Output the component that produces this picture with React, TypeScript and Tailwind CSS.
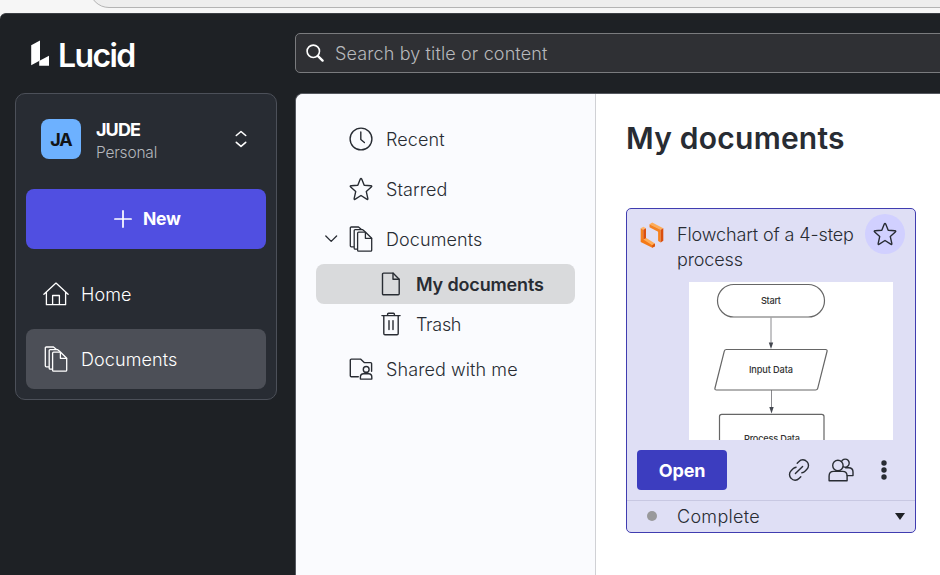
import type { ReactNode } from "react";

type IconProps = { className?: string };

function Svg({ w, h, sw = 1.3, className = "", children }: { w: number; h: number; sw?: number; className?: string; children: ReactNode }) {
  return (
    <svg
      width={w}
      height={h}
      viewBox={`0 0 ${w} ${h}`}
      fill="none"
      stroke="currentColor"
      strokeWidth={sw}
      strokeLinejoin="round"
      strokeLinecap="round"
      className={`block shrink-0 ${className}`}
    >
      {children}
    </svg>
  );
}

const LucidMark = () => (
  <svg width="19" height="27" viewBox="0 0 19 27" fill="#fff" className="block shrink-0">
    <path d="M.2 5.3 9 .5v20L.2 25.2Z" />
    <path d="M9 20.5 18 15.8v9.9H8.2L8.2 21Z" />
  </svg>
);

const DocsIcon = ({ className }: IconProps) => (
  <Svg w={24} h={26} className={className}>
    <path d="M4.6 20.8H2.3a1 1 0 0 1-1-1V2a1 1 0 0 1 1-1h7.2l2.7 2.2" />
    <path d="M8.2 23.2H6.2a1 1 0 0 1-1-1V4.6a1 1 0 0 1 1-1h7.2l2.5 2" />
    <path d="M9.6 6.2h7l6.1 6v12a1 1 0 0 1-1 1H9.6a1 1 0 0 1-1-1v-17a1 1 0 0 1 1-1Z" />
    <path d="M16.4 6.3v6h6.2" />
  </Svg>
);

const HomeIcon = () => (
  <Svg w={26} h={24}>
    <path d="M.9 12.2 13 1.1l12.1 11.1M3.4 10v12.7h19.2V10M9.6 22.6v-9.1h6.8v9.1" />
  </Svg>
);

const StarIcon = () => (
  <Svg w={24} h={24} sw={1.4}>
    <path d="M11.3 2.1q.7-1.5 1.4 0l2.5 6.1 6.7.6q1.5.2.4 1.3l-5 4.5 1.5 6.8q.3 1.6-1.1.8L12 18.5l-5.7 3.7q-1.4.8-1.1-.8l1.5-6.8-5-4.5q-1.1-1.1.4-1.3l6.7-.6Z" />
  </Svg>
);

const ClockIcon = () => (
  <Svg w={24} h={24} sw={1.4}>
    <circle cx="12" cy="12" r="10.9" />
    <path d="M11.8 4.9v7.6l3.6 3" />
  </Svg>
);

const FileIcon = () => (
  <Svg w={20} h={24} sw={1.4}>
    <path d="M2.5 1.1H12l6.2 6.2v14.5a1 1 0 0 1-1 1H2.5a1 1 0 0 1-1-1V2.1a1 1 0 0 1 1-1Z" />
    <path d="M12 1.3v6h6" />
  </Svg>
);

const TrashIcon = () => (
  <Svg w={20} h={24} sw={1.4}>
    <path d="M.9 3.6h18.2M6.6 3.4V2.3a1 1 0 0 1 1-1h4.8a1 1 0 0 1 1 1v1.1M2.8 3.8v17.7a1.2 1.2 0 0 0 1.2 1.2h12a1.2 1.2 0 0 0 1.2-1.2V3.8M8 8.6v9M12 8.6v9" />
  </Svg>
);

const SharedIcon = () => (
  <Svg w={24} h={22} sw={1.4}>
    <path d="M9.3 18.8H2.3a1 1 0 0 1-1-1V2.1a1 1 0 0 1 1-1h9.2l3.7 3.5h6.4a1 1 0 0 1 1 1v7.6" />
    <circle cx="17.2" cy="11.4" r="2.9" />
    <path d="M11.4 21.1v-2.2q0-3.2 3.2-3.2h5q3.2 0 3.2 3.2v2.2Z" />
  </Svg>
);

const LinkIcon = () => (
  <Svg w={22} h={22} sw={1.4}>
    <path d="M9.2 4.3 11 2.5a5.2 5.2 0 0 1 7.8.1 5.2 5.2 0 0 1 .1 7.6l-2.2 2.2a5 5 0 0 1-2.8 1.4" />
    <path d="M12.8 17.7 11 19.5a5.2 5.2 0 0 1-7.8-.1 5.2 5.2 0 0 1-.1-7.6l2.2-2.2a5 5 0 0 1 2.8-1.4" />
    <path d="m7.4 14.6 7.2-7.2" />
  </Svg>
);

const PeopleIcon = () => (
  <Svg w={26} h={24} sw={1.4}>
    <circle cx="9.9" cy="7.5" r="5.2" />
    <path d="M1.1 22.7v-4.8q0-4.5 4.5-4.5h9q4.5 0 4.5 4.5v4.8Z" />
    <path d="M13.5 3.6a4 4 0 1 1 2.1 5.2M17.6 9.7h3q4.4 0 4.4 4.4v3.5h-5.7" />
  </Svg>
);

const ChartIcon = () => (
  <svg width="24" height="27" viewBox="0 0 24 27" className="block shrink-0">
    <path d="M.7 6.3 3.4 4.8 6 6.2 3.3 7.7Z" fill="#ffb66b" />
    <path d="M.7 6.3 3.3 7.7v11.1l-2.6-1.3Z" fill="#f58220" />
    <path d="M3.3 7.7 6 6.2v11.4l-2.7 1.7Z" fill="#da4f0e" />
    <path d="M.7 17.6 3.3 16.4 15 22v2.3l-2.7 1.5L.7 20Z" fill="#f47a18" />
    <path d="m3.3 17.5 3-1.6 8.7 5.6-2.8 1.7Z" fill="#ffad58" />
    <path d="M12.3 23.2 15 21.6v2.6l-2.7 1.6Z" fill="#d9530e" />
    <path d="M9.5 2.2 12.2.6 23.3 6.3l-2.6 1.5Z" fill="#ffad58" />
    <path d="m9.5 2.2 11.2 5.6v12.6l-2.6-1.3V9.7L9.5 5.2Z" fill="#f58220" />
    <path d="m20.7 7.8 2.6-1.5v12.5l-2.6 1.6Z" fill="#da4f0e" />
  </svg>
);

function FlowPreview() {
  return (
    <svg width="204" height="158" viewBox="0 0 204 158" className="ml-[62px] block bg-white" fill="none" stroke="#666" strokeWidth="1.2">
      <rect x="28.5" y="2.5" width="107" height="32.5" rx="16.3" />
      <path d="M82 35.5V63M82.5 108v18" stroke="#8a8a8e" strokeWidth="1" />
      <path d="m79.8 60.5 2.2 6.5 2.2-6.5ZM80.3 125l2.2 6.5 2.2-6.5Z" fill="#444850" stroke="none" />
      <path d="M37.5 67.5h99q2 0 1.5 2l-9.3 36.8q-.4 1.7-2.2 1.7h-99q-2 0-1.5-2l9.3-36.8q.4-1.7 2.2-1.7Z" />
      <path d="M30.5 160v-25.5q0-2.2 2.2-2.2h100q2.3 0 2.3 2.2V160" />
      <g fill="#333" stroke="none" textAnchor="middle" fontFamily="Inter, sans-serif" fontSize="9.2" fontWeight="450">
        <text x="82" y="22.4" textLength="20">Start</text>
        <text x="82" y="91" textLength="44">Input Data</text>
        <text x="83" y="160" textLength="56">Process Data</text>
      </g>
    </svg>
  );
}

export default function App() {
  return (
    <div className="h-[575px] w-[940px] overflow-hidden bg-[#f6f6f6] font-['Inter',sans-serif] text-[18px] font-[360] tracking-[0.09px] text-[#282c33]">
      <div className="flex h-[13px] items-end overflow-hidden pb-[5px] pl-[89px]">
        <div className="h-[40px] w-[900px] shrink-0 rounded-l-[20px] border border-[#b4b4b4] bg-[#eeeeee]" />
      </div>
      <div className="flex h-[562px] w-[960px] rounded-tl-[6px] border-t border-[#3c3f44] bg-[#1e2125]">
        <aside className="w-[295px] shrink-0 pl-[15px] pt-[26px] text-white">
          <div className="flex h-[27px] pl-[16px]">
            <LucidMark />
            <span className="ml-[8px] mt-px text-[32px] leading-[30px] font-semibold tracking-[-1.6px]">Lucid</span>
          </div>
          <div className="mt-[26px] h-[307px] w-[262px] rounded-[10px] border border-[#4c5059] bg-[#282c33] px-[10px]">
            <div className="flex h-[95px] items-start pl-[15px] pt-[25px]">
              <div className="flex size-10 items-center justify-center rounded-[8px] bg-[#6db1ff] text-[18px] font-bold tracking-[-1px] text-[#121417]">JA</div>
              <div className="ml-[15px] w-[139px]">
                <div className="text-[18px] leading-[22px] font-bold tracking-[-0.9px]">JUDE</div>
                <div className="text-[15.5px] leading-[23px] tracking-[-0.2px] text-[#b4b7bc]">Personal</div>
              </div>
              <Svg w={12} h={18} sw={1.6} className="mt-[11px]">
                <path d="m1.3 5.5 4.7-4 4.7 4M1.3 12.3l4.7 4 4.7-4" />
              </Svg>
            </div>
            <button className="flex h-[60px] w-full items-center rounded-[8px] bg-[#504fe1] pl-[88px]">
              <Svg w={18} h={18} sw={1.7}>
                <path d="M9 .9v16.2M.9 9h16.2" />
              </Svg>
              <span className="ml-[11px] mt-px text-[17.5px] font-bold tracking-[-0.25px]">New</span>
            </button>
            <nav className="mt-[15px] flex flex-col gap-[5px]">
              <a className="flex h-[60px] items-center pl-[17px]">
                <HomeIcon />
                <span className="ml-[12px]">Home</span>
              </a>
              <a className="flex h-[60px] items-center rounded-[8px] bg-[#4c4f57] pl-[18px]">
                <DocsIcon />
                <span className="ml-[13px]">Documents</span>
              </a>
            </nav>
          </div>
        </aside>

        <div className="w-[665px] pt-[19px]">
          <div className="flex h-[40px] items-center rounded-[5px] border border-[#7a7b7e] bg-[#2f3034] pl-[10px]">
            <Svg w={19} h={19} sw={1.6} className="text-white">
              <circle cx="7.3" cy="7.3" r="6.2" />
              <path d="m12 12.2 4.6 4.4" strokeWidth="2.4" />
            </Svg>
            <span className="ml-[10px] tracking-[0.13px] text-[#b7b8bb]">Search by title or content</span>
          </div>

          <div className="mt-[20px] flex h-[490px] overflow-hidden rounded-tl-[8px] border-l border-t border-[#55585f] bg-white">
            <nav className="h-full w-[300px] shrink-0 border-r border-[#d0d1d5] bg-[#fafbfe] pt-[20px]">
              <a className="flex h-[50px] items-center pl-[53px]">
                <ClockIcon />
                <span className="ml-[13px]">Recent</span>
              </a>
              <a className="flex h-[50px] items-center pl-[53px]">
                <StarIcon />
                <span className="ml-[13px]">Starred</span>
              </a>
              <a className="flex h-[50px] items-center pl-[29px]">
                <Svg w={13} h={8} sw={1.3}>
                  <path d="m.8 1 5.4 5.4L11.6 1" />
                </Svg>
                <DocsIcon className="ml-[11px]" />
                <span className="ml-[13px]">Documents</span>
              </a>
              <a className="ml-[20px] flex h-[40px] w-[259px] items-center rounded-[8px] bg-[#d9dadc] pl-[65px]">
                <FileIcon />
                <span className="ml-[15px] font-semibold tracking-[-0.15px]">My documents</span>
              </a>
              <a className="flex h-[40px] items-center pl-[85px]">
                <TrashIcon />
                <span className="ml-[15px] tracking-[-0.3px]">Trash</span>
              </a>
              <a className="flex h-[50px] items-center pl-[53px]">
                <SharedIcon />
                <span className="ml-[13px]">Shared with me</span>
              </a>
            </nav>

            <main className="pl-[30px] pt-[24px]">
              <h1 className="text-[30px] leading-[40px] font-semibold tracking-[0.24px]">My documents</h1>
              <section className="mt-[50px] h-[325px] w-[290px] rounded-[5px] border border-[#403db0] bg-[#dfdff5]">
                <div className="flex h-[73px] items-start pl-[13px]">
                  <div className="mt-[13px]">
                    <ChartIcon />
                  </div>
                  <p className="ml-[13px] mt-[13px] w-[188px] leading-[25px] tracking-[-0.12px] whitespace-nowrap">
                    Flowchart of a 4-step
                    <br />
                    process
                  </p>
                  <button className="mt-[5px] flex size-10 shrink-0 items-center justify-center rounded-full bg-[#d1d0ff]">
                    <StarIcon />
                  </button>
                </div>
                <FlowPreview />
                <div className="flex h-[61px] items-center border-b border-[#c8c8e2] pl-[10px]">
                  <button className="h-[40px] w-[90px] rounded-[4px] bg-[#3c3dbf] font-bold tracking-[-0.2px] text-white">Open</button>
                  <div className="ml-[61px] flex items-center">
                    <LinkIcon />
                    <div className="ml-[18px]">
                      <PeopleIcon />
                    </div>
                    <svg width="6" height="20" viewBox="0 0 6 20" className="ml-[27px]" fill="#282c33">
                      <circle cx="3" cy="3" r="2.7" />
                      <circle cx="3" cy="10" r="2.7" />
                      <circle cx="3" cy="17" r="2.7" />
                    </svg>
                  </div>
                </div>
                <div className="flex h-[30px] items-center pl-[20px]">
                  <span className="size-[10px] rounded-full bg-[#99999b]" />
                  <span className="ml-[20px] w-[218px] tracking-[0.3px]">Complete</span>
                  <svg width="10" height="7" viewBox="0 0 10 7" fill="#1e2125">
                    <path d="M0 0h10L5 7Z" />
                  </svg>
                </div>
              </section>
            </main>
          </div>
        </div>
      </div>
    </div>
  );
}
